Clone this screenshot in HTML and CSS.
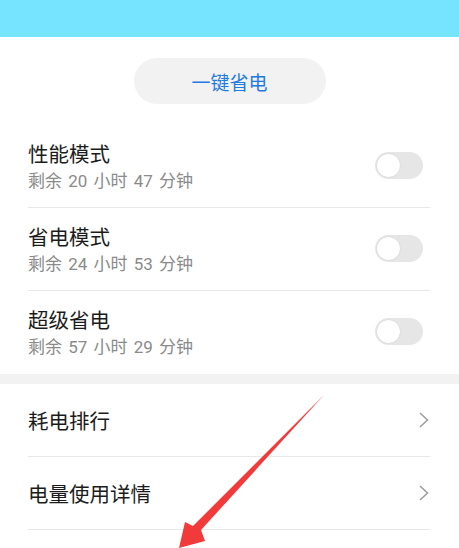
FILE: index.html
```html
<!DOCTYPE html>
<html lang="zh-CN">
<head>
<meta charset="utf-8">
<link rel="stylesheet" href="styles.css">
</head>
<body>
<div class="page">
  <div class="topbar"></div>
  <div class="btn-wrap"><div class="btn">一键省电</div></div>
  <div class="modes">
    <div class="mode">
      <div class="mode-text">
        <div class="title">性能模式</div>
        <div class="sub">剩余 20 小时 47 分钟</div>
      </div>
      <div class="toggle"><span class="knob"></span></div>
    </div>
    <div class="mode">
      <div class="mode-text">
        <div class="title">省电模式</div>
        <div class="sub">剩余 24 小时 53 分钟</div>
      </div>
      <div class="toggle"><span class="knob"></span></div>
    </div>
    <div class="mode last">
      <div class="mode-text">
        <div class="title">超级省电</div>
        <div class="sub">剩余 57 小时 29 分钟</div>
      </div>
      <div class="toggle"><span class="knob"></span></div>
    </div>
  </div>
  <div class="band"></div>
  <div class="links">
    <div class="link"><span class="title">耗电排行</span>
      <svg class="chev" width="12" height="18" viewBox="0 0 12 18"><path d="M2 2 L9.5 9 L2 16" fill="none" stroke="#9a9a9a" stroke-width="1.5"/></svg>
    </div>
    <div class="link"><span class="title">电量使用详情</span>
      <svg class="chev" width="12" height="18" viewBox="0 0 12 18"><path d="M2 2 L9.5 9 L2 16" fill="none" stroke="#9a9a9a" stroke-width="1.5"/></svg>
    </div>
  </div>
  <svg class="arrow" width="459" height="548" viewBox="0 0 459 548">
    <polygon points="324,395 201,530 205,541 179,548 185,522 193,526" fill="#f23a3a"/>
  </svg>
</div>
</body>
</html>
```
FILE: styles.css
```css
html, body {
  margin: 0;
  padding: 0;
  background: #ffffff;
}
body {
  font-family: "Noto Sans CJK SC", "Noto Sans", sans-serif;
  overflow: hidden;
}
.page {
  position: relative;
  width: 459px;
  height: 548px;
  overflow: hidden;
  background: #fff;
}
.topbar {
  height: 37px;
  background: #76e4fe;
}
.btn-wrap {
  display: flex;
  justify-content: center;
  padding-top: 21px;
}
.btn {
  width: 192px;
  height: 46px;
  border-radius: 23px;
  background: #f2f2f2;
  color: #1f7ae2;
  font-size: 19px;
  display: flex;
  align-items: center;
  justify-content: center;
}
.modes {
  margin-top: 21px;
  padding: 0 29px 0 28px;
}
.mode {
  height: 82px;
  border-bottom: 1px solid #e8e8e8;
  display: flex;
  align-items: center;
  justify-content: space-between;
}
.mode.last {
  border-bottom: none;
}
.mode-text {
  display: flex;
  flex-direction: column;
}
.title {
  font-size: 20.5px;
  color: #1b1b1b;
  line-height: 28px;
}
.sub {
  font-family: Roboto, "Noto Sans CJK SC", sans-serif;
  font-size: 17px;
  word-spacing: 2px;
  color: #8a8a8a;
  line-height: 24px;
  margin-top: 2px;
}
.toggle {
  width: 48px;
  height: 27px;
  border-radius: 14px;
  background: #e6e6e6;
  position: relative;
  margin-right: 7px;
  margin-top: -2px;
}
.knob {
  position: absolute;
  left: 1px;
  top: 1px;
  width: 23px;
  height: 23px;
  border-radius: 50%;
  background: #fff;
  border: 1px solid #dcdcdc;
}
.band {
  height: 10px;
  background: #f2f2f2;
  margin-top: 1px;
}
.links {
  padding: 0 29px 0 28px;
}
.link {
  height: 72px;
  border-bottom: 1px solid #e8e8e8;
  display: flex;
  align-items: center;
  justify-content: space-between;
}
.link .title {
  font-size: 20.5px;
}
.arrow {
  position: absolute;
  left: 0;
  top: 0;
}
```
